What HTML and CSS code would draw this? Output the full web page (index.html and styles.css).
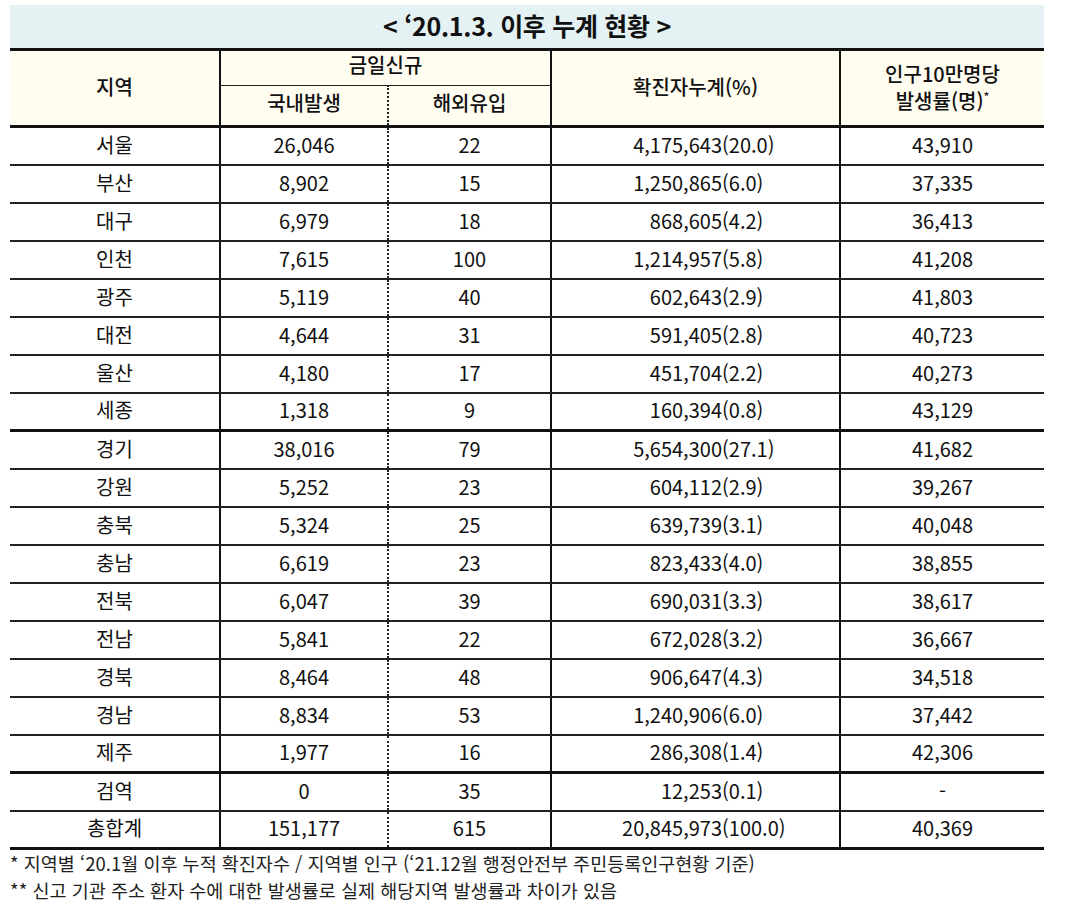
FILE: index.html
```html
<!DOCTYPE html>
<html lang="ko">
<head>
<meta charset="utf-8">
<title>누계 현황</title>
<link rel="stylesheet" href="styles.css">
</head>
<body>
<div class="page">
  <div class="title">&lt; ‘20.1.3. 이후 누계 현황 &gt;</div>
  <table class="tbl">
    <colgroup>
      <col class="c1"><col class="c2"><col class="c3"><col class="c4"><col class="c5">
    </colgroup>
    <thead>
      <tr class="h1">
        <th rowspan="2" class="vr">지역</th>
        <th colspan="2" class="vr sub">금일신규</th>
        <th rowspan="2" class="vr">확진자누계(%)</th>
        <th rowspan="2" class="two">인구10만명당<br>발생률(명)<sup>*</sup></th>
      </tr>
      <tr class="h2">
        <th class="dot">국내발생</th>
        <th class="vr">해외유입</th>
      </tr>
    </thead>
    <tbody>
      <tr><td class="vr">서울</td><td class="dot">26,046</td><td class="vr">22</td><td class="vr cum"><span class="n">4,175,643</span><span>(20.0)</span></td><td>43,910</td></tr>
      <tr><td class="vr">부산</td><td class="dot">8,902</td><td class="vr">15</td><td class="vr cum"><span class="n">1,250,865</span><span>(6.0)</span></td><td>37,335</td></tr>
      <tr><td class="vr">대구</td><td class="dot">6,979</td><td class="vr">18</td><td class="vr cum"><span class="n">868,605</span><span>(4.2)</span></td><td>36,413</td></tr>
      <tr><td class="vr">인천</td><td class="dot">7,615</td><td class="vr">100</td><td class="vr cum"><span class="n">1,214,957</span><span>(5.8)</span></td><td>41,208</td></tr>
      <tr><td class="vr">광주</td><td class="dot">5,119</td><td class="vr">40</td><td class="vr cum"><span class="n">602,643</span><span>(2.9)</span></td><td>41,803</td></tr>
      <tr><td class="vr">대전</td><td class="dot">4,644</td><td class="vr">31</td><td class="vr cum"><span class="n">591,405</span><span>(2.8)</span></td><td>40,723</td></tr>
      <tr><td class="vr">울산</td><td class="dot">4,180</td><td class="vr">17</td><td class="vr cum"><span class="n">451,704</span><span>(2.2)</span></td><td>40,273</td></tr>
      <tr class="thick"><td class="vr">세종</td><td class="dot">1,318</td><td class="vr">9</td><td class="vr cum"><span class="n">160,394</span><span>(0.8)</span></td><td>43,129</td></tr>
      <tr><td class="vr">경기</td><td class="dot">38,016</td><td class="vr">79</td><td class="vr cum"><span class="n">5,654,300</span><span>(27.1)</span></td><td>41,682</td></tr>
      <tr><td class="vr">강원</td><td class="dot">5,252</td><td class="vr">23</td><td class="vr cum"><span class="n">604,112</span><span>(2.9)</span></td><td>39,267</td></tr>
      <tr><td class="vr">충북</td><td class="dot">5,324</td><td class="vr">25</td><td class="vr cum"><span class="n">639,739</span><span>(3.1)</span></td><td>40,048</td></tr>
      <tr><td class="vr">충남</td><td class="dot">6,619</td><td class="vr">23</td><td class="vr cum"><span class="n">823,433</span><span>(4.0)</span></td><td>38,855</td></tr>
      <tr><td class="vr">전북</td><td class="dot">6,047</td><td class="vr">39</td><td class="vr cum"><span class="n">690,031</span><span>(3.3)</span></td><td>38,617</td></tr>
      <tr><td class="vr">전남</td><td class="dot">5,841</td><td class="vr">22</td><td class="vr cum"><span class="n">672,028</span><span>(3.2)</span></td><td>36,667</td></tr>
      <tr><td class="vr">경북</td><td class="dot">8,464</td><td class="vr">48</td><td class="vr cum"><span class="n">906,647</span><span>(4.3)</span></td><td>34,518</td></tr>
      <tr><td class="vr">경남</td><td class="dot">8,834</td><td class="vr">53</td><td class="vr cum"><span class="n">1,240,906</span><span>(6.0)</span></td><td>37,442</td></tr>
      <tr class="thick"><td class="vr">제주</td><td class="dot">1,977</td><td class="vr">16</td><td class="vr cum"><span class="n">286,308</span><span>(1.4)</span></td><td>42,306</td></tr>
      <tr><td class="vr">검역</td><td class="dot">0</td><td class="vr">35</td><td class="vr cum"><span class="n">12,253</span><span>(0.1)</span></td><td>-</td></tr>
      <tr class="last"><td class="vr">총합계</td><td class="dot">151,177</td><td class="vr">615</td><td class="vr cum"><span class="n">20,845,973</span><span>(100.0)</span></td><td>40,369</td></tr>
    </tbody>
  </table>
  <div class="notes">
    <p>* 지역별 ‘20.1월 이후 누적 확진자수 / 지역별 인구 (‘21.12월 행정안전부 주민등록인구현황 기준)</p>
    <p>** 신고 기관 주소 환자 수에 대한 발생률로 실제 해당지역 발생률과 차이가 있음</p>
  </div>
</div>
</body>
</html>
```

FILE: styles.css
```css
html, body {
  margin: 0;
  padding: 0;
  background: #ffffff;
}
body {
  font-family: "Noto Sans CJK KR", "Noto Sans", sans-serif;
  color: #111;
}
.page {
  width: 1034px;
  padding: 5px 0 0 10px;
}
.title {
  height: 43px;
  box-sizing: border-box;
  padding-bottom: 4px;
  background: #e5f2f4;
  display: flex;
  align-items: center;
  justify-content: center;
  font-weight: 700;
  font-size: 25px;
  letter-spacing: -0.3px;
  color: #111;
}
.tbl {
  width: 1034px;
  border-collapse: collapse;
  table-layout: fixed;
  font-size: 20px;
}
.c1 { width: 210px; }
.c2 { width: 168px; }
.c3 { width: 163px; }
.c4 { width: 289px; }
.c5 { width: 204px; }

.tbl th {
  font-weight: 500;
  background: #fffdf0;
  padding: 0;
  line-height: 26px;
  color: #111;
}
.tbl thead tr.h1 th {
  border-top: 3px solid #111;
  height: 31px;
  padding-bottom: 3px;
}
.tbl thead tr.h1 th.sub {
  height: 27px;
  padding-bottom: 7px;
}
.tbl thead tr.h2 th {
  height: 34px;
  border-bottom: 3px solid #111;
  padding-bottom: 5px;
}
.tbl thead tr.h1 th[rowspan] {
  border-bottom: 3px solid #111;
}
.tbl th.sub {
  border-bottom: 1px solid #222;
}
.tbl th.two {
  line-height: 27px;
  padding-bottom: 4px;
}
.tbl sup {
  font-size: 12px;
  line-height: 0;
  vertical-align: 8px;
}
.tbl td {
  height: 38px;
  padding: 0 0 2px 0;
  box-sizing: border-box;
  text-align: center;
  border-bottom: 2px solid #222;
  line-height: 24px;
  color: #111;
}
.tbl tr.thick td,
.tbl tr.last td {
  border-bottom: 3px solid #111;
}
.vr {
  border-right: 2px solid #111;
}
.dot {
  border-right: 2px dotted #222;
}
.tbl td.cum {
  text-align: left;
  white-space: nowrap;
}
.cum .n {
  display: inline-block;
  width: 170px;
  text-align: right;
}
.notes {
  padding-top: 0;
  font-size: 18.5px;
  color: #222;
}
.notes p {
  margin: 0;
  line-height: 27px;
}
```
